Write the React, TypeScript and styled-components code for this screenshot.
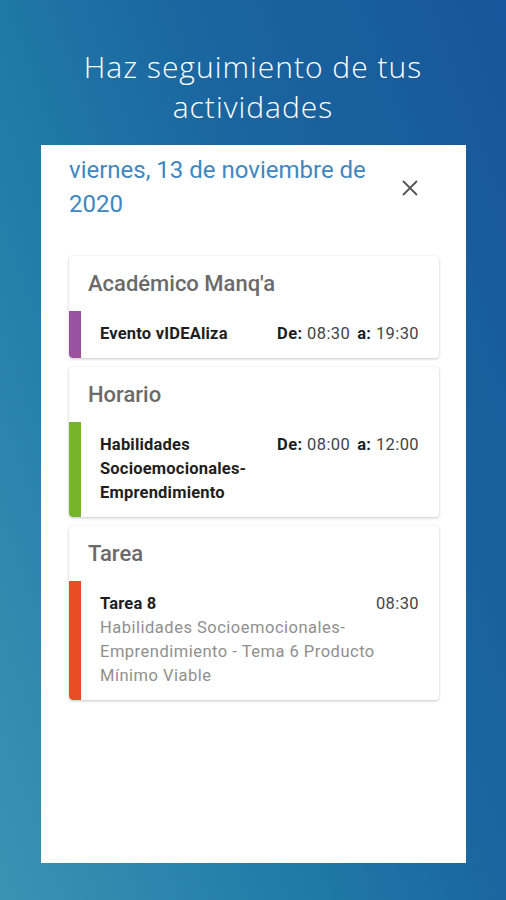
import React from "react";
import styled, { createGlobalStyle } from "styled-components";

const Global = createGlobalStyle`
  html, body { margin: 0; padding: 0; }
  body {
    width: 506px;
    height: 900px;
    overflow: hidden;
    font-family: Roboto, "Liberation Sans", sans-serif;
  }
`;

const Screen = styled.div`
  width: 506px;
  height: 900px;
  box-sizing: border-box;
  background: linear-gradient(70deg, #3b93b3 0%, #1f78a6 39%, #1a66a0 61%, #17569a 100%);
  display: flex;
  flex-direction: column;
  align-items: center;
  padding-top: 47px;
`;

const Headline = styled.h1`
  margin: 0;
  width: 440px;
  text-align: center;
  color: #ffffff;
  font-family: "Open Sans", "Liberation Sans", sans-serif;
  font-weight: 300;
  font-size: 30px;
  line-height: 40px;
  letter-spacing: 1px;
`;

const Panel = styled.div`
  margin-top: 18px;
  margin-left: 1px;
  width: 425px;
  height: 718px;
  box-sizing: border-box;
  background: #ffffff;
  padding: 8px 27px 0 28px;
  display: flex;
  flex-direction: column;
`;

const Header = styled.div`
  display: flex;
  align-items: center;
  gap: 20px;
  padding-right: 20px;
`;

const DateTitle = styled.div`
  flex: 1;
  color: #3f87c0;
  font-size: 24px;
  line-height: 34px;
`;

const CloseButton = styled.button`
  border: none;
  background: none;
  padding: 0;
  width: 18px;
  height: 18px;
  display: flex;
  align-items: center;
  justify-content: center;
  color: #555555;
  margin-top: 2px;
`;

const CardList = styled.div`
  margin-top: 35px;
  display: flex;
  flex-direction: column;
  gap: 9px;
`;

const Card = styled.div`
  background: #ffffff;
  border-radius: 4px;
  box-shadow: 0 1px 3px rgba(0, 0, 0, 0.22), 0 0 1px rgba(0, 0, 0, 0.08);
  overflow: hidden;
`;

const CardTitle = styled.div`
  padding: 15px 19px 14px;
  color: #6a6a6a;
  font-size: 22px;
  font-weight: 500;
  line-height: 26px;
`;

const Entry = styled.div<{ $color: string }>`
  border-left: 12px solid ${(p) => p.$color};
  border-bottom-left-radius: 4px;
  padding: 11px 20px 12px 19px;
`;

const EntryRow = styled.div`
  display: flex;
  align-items: flex-start;
  gap: 16px;
`;

const EntryName = styled.div`
  flex: 1;
  color: #1e1e1e;
  font-size: 16.5px;
  font-weight: 700;
  line-height: 24px;
  letter-spacing: 0.2px;
`;

const TimeRange = styled.div`
  color: #444444;
  font-size: 16.5px;
  line-height: 24px;
  white-space: nowrap;
  letter-spacing: 0.4px;
`;

const TimeLabel = styled.b<{ $gap?: boolean }>`
  color: #1e1e1e;
  font-weight: 700;
  margin-left: ${(p) => (p.$gap ? "7px" : "0")};
`;

const Description = styled.div`
  color: #8f8f8f;
  font-size: 16.5px;
  line-height: 24px;
  letter-spacing: 0.5px;
`;

const CloseIcon = () => (
  <svg width="18" height="18" viewBox="0 0 18 18" fill="none">
    <path d="M2 2 L16 16 M16 2 L2 16" stroke="currentColor" strokeWidth="1.8" strokeLinecap="butt" />
  </svg>
);

const Range = ({ from, to }: { from: string; to: string }) => (
  <TimeRange>
    <TimeLabel>De:</TimeLabel> {from}
    <TimeLabel $gap>a:</TimeLabel> {to}
  </TimeRange>
);

export default function App() {
  return (
    <>
      <Global />
      <Screen>
        <Headline>Haz seguimiento de tus actividades</Headline>
        <Panel>
          <Header>
            <DateTitle>viernes, 13 de noviembre de 2020</DateTitle>
            <CloseButton aria-label="Cerrar">
              <CloseIcon />
            </CloseButton>
          </Header>
          <CardList>
            <Card>
              <CardTitle>Académico Manq'a</CardTitle>
              <Entry $color="#9a52a0">
                <EntryRow>
                  <EntryName>Evento vIDEAliza</EntryName>
                  <Range from="08:30" to="19:30" />
                </EntryRow>
              </Entry>
            </Card>
            <Card>
              <CardTitle>Horario</CardTitle>
              <Entry $color="#76b42c">
                <EntryRow>
                  <EntryName>Habilidades Socioemocionales-Emprendimiento</EntryName>
                  <Range from="08:00" to="12:00" />
                </EntryRow>
              </Entry>
            </Card>
            <Card>
              <CardTitle>Tarea</CardTitle>
              <Entry $color="#e84d24">
                <EntryRow>
                  <EntryName>Tarea 8</EntryName>
                  <TimeRange>08:30</TimeRange>
                </EntryRow>
                <Description>
                  Habilidades Socioemocionales-Emprendimiento - Tema 6 Producto Mínimo Viable
                </Description>
              </Entry>
            </Card>
          </CardList>
        </Panel>
      </Screen>
    </>
  );
}
